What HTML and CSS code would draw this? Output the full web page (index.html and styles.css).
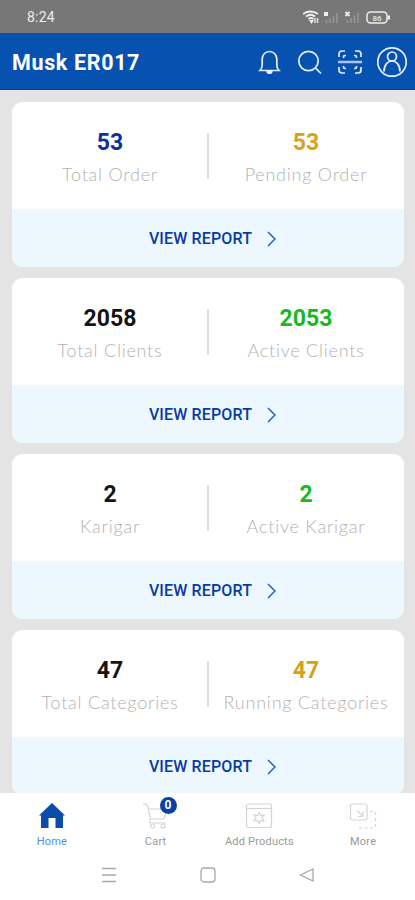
FILE: index.html
```
<!DOCTYPE html>
<html lang="en">
<head>
  <meta charset="UTF-8">
  <meta name="viewport" content="width=device-width, initial-scale=1.0">
  <title>Musk ER017</title>
  <link rel="stylesheet" href="styles.css">
</head>
<body>
  <div class="app">
    <!-- Phone status bar -->
    <div class="status-bar">
      <span class="time">8:24</span>
      <svg class="status-icons" width="90" height="16" viewBox="0 0 90 16" fill="none">
        <path d="M0 5q7.500-5 15 0M3 7.500q5-3.500 9 0M5.500 10q2.500-2 5 0" stroke="#eee" stroke-width="1.800"/>
        <path d="M8.500 15l-2.500-4h5z" fill="#eee"/>
        <path d="M12 9v5M14.500 9v5" stroke="#ddd" stroke-width="1.500"/>
        <rect x="21" y="3" width="4" height="4" fill="#eee"/>
        <path d="M23.500 11v3M27 9v5M30.500 6.500v7.500M34 4v10" stroke="#999" stroke-width="1.500"/>
        <path d="M42.500 3l4 4M46.500 3l-4 4" stroke="#eee" stroke-width="1.800"/>
        <path d="M44.500 11v3M48 9v5M51.500 6.500v7.500M55 4v10" stroke="#999" stroke-width="1.500"/>
        <rect x="64" y="3" width="20" height="11" rx="3.500" stroke="#eee" stroke-width="1.500"/>
        <path d="M86 6.500v4" stroke="#eee" stroke-width="2"/>
        <text x="74" y="11.500" class="battery">86</text>
      </svg>
    </div>

    <!-- App header -->
    <header class="header">
      <h1 class="title">Musk ER017</h1>
      <div class="actions">
        <svg class="bell" width="24" height="26" viewBox="0 0 24 26">
          <path d="M3 21.500h19c-1.500-1.500-2.200-3-2.200-5.500V10c0-4-3-7.500-7.300-7.500S5.200 6 5.200 10v6c0 2.500-.7 4-2.200 5.500z"/>
          <path d="M10 22c.5 3 4.500 3 5 0" fill="#e4efff"/>
        </svg>
        <svg class="search" width="26" height="26" viewBox="0 0 26 26">
          <circle cx="11.500" cy="12" r="9.700"/>
          <path d="M18.500 19l5.500 5.500"/>
        </svg>
        <svg class="scan" width="26" height="26" viewBox="0 0 26 26">
          <path d="M2 8V5q0-3 3-3h3M18 2h3q3 0 3 3v3M24 18v3q0 3-3 3h-3M8 24H5q-3 0-3-3v-3"/>
          <path d="M6.500 9V8q0-1.500 1.500-1.500h1M17 6.500h1q1.500 0 1.500 1.500v1M19.500 17v1q0 1.500-1.500 1.500h-1M9 19.500H8q-1.500 0-1.500-1.500v-1"/>
          <path d="M1 13h24" stroke="#a9c6f5" stroke-width="2.500"/>
        </svg>
        <svg class="profile" width="32" height="32" viewBox="0 0 32 32">
          <circle cx="16" cy="16" r="14.200"/>
          <circle cx="16" cy="10.500" r="4.500"/>
          <path d="M8 25.500c0-14 16-14 16 0"/>
        </svg>
      </div>
    </header>

    <!-- Report cards -->
    <main class="cards">
      <section class="card">
        <div class="stats">
          <div class="stat"><div class="value blue">53</div><div class="label">Total Order</div></div>
          <div class="stat"><div class="value gold">53</div><div class="label">Pending Order</div></div>
        </div>
        <a class="report">VIEW REPORT <svg class="arrow" width="9" height="16" viewBox="0 0 9 16"><path d="M1 1l7 7-7 7"/></svg></a>
      </section>

      <section class="card">
        <div class="stats">
          <div class="stat"><div class="value">2058</div><div class="label">Total Clients</div></div>
          <div class="stat"><div class="value green">2053</div><div class="label">Active Clients</div></div>
        </div>
        <a class="report">VIEW REPORT <svg class="arrow" width="9" height="16" viewBox="0 0 9 16"><path d="M1 1l7 7-7 7"/></svg></a>
      </section>

      <section class="card">
        <div class="stats">
          <div class="stat"><div class="value">2</div><div class="label">Karigar</div></div>
          <div class="stat"><div class="value green">2</div><div class="label">Active Karigar</div></div>
        </div>
        <a class="report">VIEW REPORT <svg class="arrow" width="9" height="16" viewBox="0 0 9 16"><path d="M1 1l7 7-7 7"/></svg></a>
      </section>

      <section class="card">
        <div class="stats">
          <div class="stat"><div class="value">47</div><div class="label">Total Categories</div></div>
          <div class="stat"><div class="value gold">47</div><div class="label">Running Categories</div></div>
        </div>
        <a class="report">VIEW REPORT <svg class="arrow" width="9" height="16" viewBox="0 0 9 16"><path d="M1 1l7 7-7 7"/></svg></a>
      </section>
    </main>

    <!-- Bottom tabs -->
    <nav class="tabs">
      <a class="tab active">
        <svg width="28" height="28" viewBox="0 0 28 28">
          <path d="M14 1L1 13.500h2V26h7.500V16h7v10H25V13.500h2z" fill="#0a4bab"/>
        </svg>
        <span>Home</span>
      </a>
      <a class="tab">
        <svg class="line" width="28" height="28" viewBox="0 0 28 28">
          <path d="M1 2h3l2 3 2.500 12H22l3-10H7M8.500 17q-2.500 4 1 4H24"/>
          <circle cx="10.500" cy="24" r="2"/>
          <circle cx="21" cy="24" r="2"/>
        </svg>
        <span>Cart</span>
        <b class="badge">0</b>
      </a>
      <a class="tab">
        <svg class="line" width="28" height="28" viewBox="0 0 28 28">
          <rect x="1.500" y="2" width="25" height="23.500" rx="2"/>
          <path d="M2 6.500h24"/>
          <path d="M14 10.500l1.500 3 3.500-.5-2 3 2 3-3.500-.5-1.500 3-1.500-3-3.500.5 2-3-2-3 3.500.5z"/>
        </svg>
        <span>Add Products</span>
      </a>
      <a class="tab">
        <svg class="line" width="28" height="28" viewBox="0 0 28 28">
          <rect x="1.500" y="2" width="16.500" height="16" rx="2"/>
          <path d="M8 8.500l6 6M14 9.500v5H9"/>
          <path d="M21 9.500h5.500V26H11v-5" stroke-dasharray="3 3"/>
        </svg>
        <span>More</span>
      </a>
    </nav>

    <!-- Phone navigation -->
    <div class="phone-nav">
      <svg width="16" height="16" viewBox="0 0 16 16"><path d="M1 1.500h14M1 8h14M1 14.500h14"/></svg>
      <svg width="16" height="16" viewBox="0 0 16 16"><rect x="1" y="1" width="14" height="14" rx="3"/></svg>
      <svg width="16" height="16" viewBox="0 0 16 16"><path d="M14 2v12L1.500 8z"/></svg>
    </div>
  </div>
</body>
</html>
```

FILE: styles.css
```
* {
  box-sizing: border-box;
}

body {
  margin: 0;
  font-family: Roboto, sans-serif;
  background: #e4e4e4;
}

.app {
  height: 900px;
  display: flex;
  flex-direction: column;
  overflow: hidden;
}

/* Status bar */
.status-bar {
  flex: none;
  height: 33px;
  padding: 0 22px 0 27px;
  display: flex;
  align-items: center;
  justify-content: space-between;
  background: #777;
  color: #eee;
}

.time {
  font-size: 14px;
  letter-spacing: 0.2px;
}

.battery {
  font-size: 8px;
  font-weight: 700;
  fill: #ddd;
  text-anchor: middle;
}

/* Header */
.header {
  flex: none;
  height: 57px;
  padding: 2px 7px 0 12px;
  display: flex;
  align-items: center;
  justify-content: space-between;
  background: #0751b0;
  border-bottom: 1px solid #0a3fa6;
}

.title {
  margin: 0;
  padding-top: 1px;
  font-size: 21.5px;
  font-weight: 700;
  letter-spacing: 0.65px;
  color: #fff;
}

.actions {
  display: flex;
  align-items: center;
  fill: none;
  stroke: #e4efff;
  stroke-width: 1.7;
}

.search {
  margin-left: 16px;
}

.scan {
  margin-left: 14px;
}

.profile {
  margin-left: 13px;
}

/* Cards */
.cards {
  flex: 1;
  min-height: 0;
  overflow: hidden;
  padding: 12px 11px 0 12px;
}

.card {
  height: 165px;
  margin-bottom: 11px;
  border-radius: 11px;
  overflow: hidden;
  background: #fff;
}

.stats {
  height: 107px;
  display: flex;
  background: linear-gradient(#dfdfdf, #dfdfdf) center 31px / 2px 46px no-repeat;
}

.stat {
  flex: 1;
  padding-top: 27px;
  text-align: center;
}

.value {
  height: 28px;
  font-size: 23px;
  line-height: 28px;
  font-weight: 700;
  color: #151515;
}

.value.blue {
  color: #0b329b;
}

.value.gold {
  color: #d5a21b;
}

.value.green {
  color: #17b91c;
}

.label {
  margin-top: 5px;
  font-family: Lato, sans-serif;
  font-size: 18px;
  line-height: 24px;
  font-weight: 300;
  letter-spacing: 0.77px;
  white-space: nowrap;
  color: #b2b2b2;
}

.report {
  height: 58px;
  padding: 1px 0 0 9px;
  display: flex;
  align-items: center;
  justify-content: center;
  gap: 15px;
  background: #ecf7fe;
  color: #0b3b9f;
  font-size: 16px;
  font-weight: 500;
  letter-spacing: 0.15px;
}

.arrow {
  fill: none;
  stroke: #2463b4;
  stroke-width: 1.5;
}

/* Tabs */
.tabs {
  flex: none;
  height: 61px;
  padding-top: 9px;
  display: flex;
  background: #fff;
}

.tab {
  flex: 1;
  position: relative;
  display: flex;
  flex-direction: column;
  align-items: center;
  gap: 5px;
  font-size: 11px;
  line-height: 14px;
  letter-spacing: 0.2px;
  color: #999;
}

.tab.active {
  color: #4b91dc;
}

.line {
  fill: none;
  stroke: #d4d4d4;
  stroke-width: 1.2;
}

.badge {
  position: absolute;
  top: -5px;
  left: calc(50% + 4px);
  width: 17px;
  height: 17px;
  border-radius: 50%;
  background: #0a439f;
  color: #fff;
  font-size: 12px;
  line-height: 17px;
  text-align: center;
}

/* Phone navigation */
.phone-nav {
  flex: none;
  height: 46px;
  padding: 13px 100px 0 101px;
  display: flex;
  justify-content: space-between;
  background: #fff;
  fill: none;
  stroke: #a8a8a8;
  stroke-width: 1.3;
}
```
